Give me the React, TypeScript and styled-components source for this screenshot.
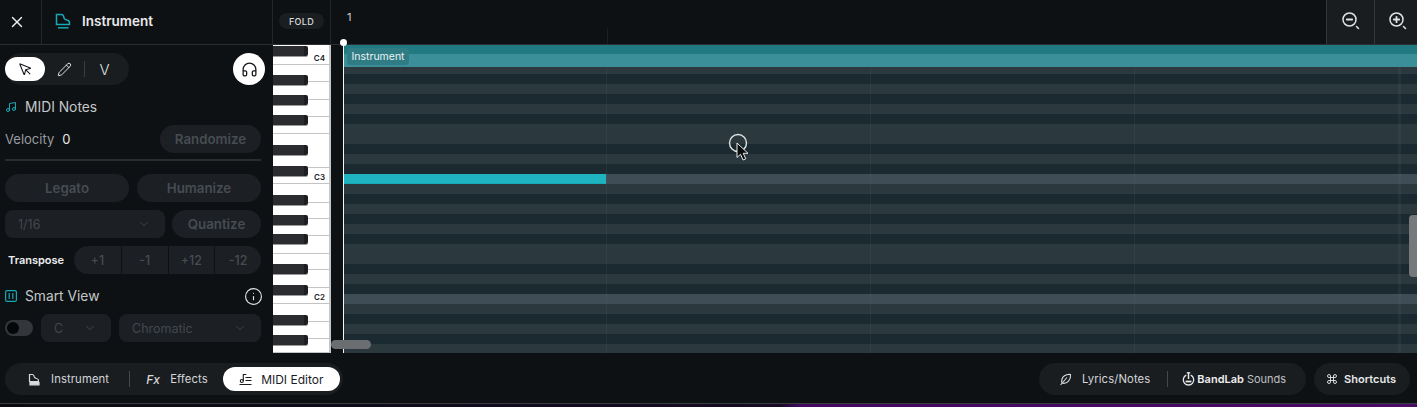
import styled, {createGlobalStyle} from "styled-components";
import {ChevronDown, Command, Headphones, Info, MousePointer, Music, Pencil, X} from "lucide-react";

const GlobalStyle = createGlobalStyle`
  html, body {
    margin: 0;
    padding: 0;
    background: #0e1114;
    overflow: hidden;
  }

  * {
    box-sizing: border-box;
  }
`;

const OCTAVE = ["C", "L", "D", "L", "D", "L", "D", "L", "L", "D", "L", "D"];
const rows = ["D", ...OCTAVE, ...OCTAVE, ...OCTAVE].slice(0, 31);

const WHITE_KEYS: { height: number, label?: string }[] = [
    {height: 20, label: "C4"}, {height: 17}, {height: 18}, {height: 17}, {height: 17}, {height: 34},
    {height: 16, label: "C3"}, {height: 19}, {height: 16}, {height: 17}, {height: 18}, {height: 16},
    {height: 18}, {height: 16, label: "C2"}, {height: 18}, {height: 17}, {height: 14},
];
const BLACK_KEYS = [1, 30, 50, 70, 100, 121, 150, 170, 189, 219, 240, 270, 290];
const BARS = [262, 526, 790, 1054];

function PianoIcon() {
    return (
        <svg width="18" height="18" viewBox="0 0 18 18" fill="none" stroke="currentColor" strokeWidth="1.5">
            <path d="M2.5 12.5V2.5h5c2 0 2.2 1.4 2.4 3 .2 1.600 1 2.200 3 2.600 1.700.3 2.600 1.300 2.600 3v1.400z"/>
            <path d="M4 15.800h10.500"/>
        </svg>
    );
}

function SmallPiano() {
    return (
        <svg width="13" height="13" viewBox="0 0 13 13" fill="none" stroke="#d8dadb" strokeWidth="1.2">
            <path d="M1.500 8.500V1.500h3c1.400 0 1.500 1 1.700 2.200.2 1 .8 1.500 2.300 1.800 1.300.2 2 1 2 2.200v.8z"/>
            <path d="M2 9v2.800h9V9" fill="#d8dadb"/>
        </svg>
    );
}

function MidiIcon() {
    return (
        <svg width="13" height="13" viewBox="0 0 13 13" fill="none" stroke="#1a1c1f" strokeWidth="1.100">
            <circle cx="2.800" cy="8" r="1.500"/>
            <path d="M4.300 8V1.500h3M6.500 4.500h6M6.500 7.500h6M.500 11.500h12"/>
        </svg>
    );
}

function MagnifierIcon({plus}: { plus?: boolean }) {
    return (
        <svg width="20" height="20" viewBox="0 0 20 20" fill="none" stroke="#dfe1e2" strokeWidth="1.500" strokeLinecap="round">
            <circle cx="8.500" cy="8.500" r="6.500"/>
            <path d="M5.800 8.500h5.400" strokeWidth="1.800"/>
            {plus && <path d="M8.500 5.800v5.400" strokeWidth="1.800"/>}
            <path d="M15.500 15.500l2 2"/>
        </svg>
    );
}

function FeatherIcon() {
    return (
        <svg width="13" height="13" viewBox="0 0 13 13" fill="none" stroke="#d8dadb" strokeWidth="1.100">
            <path d="M3 10c-.8-3 .2-5.500 2.500-7.200C7.500 1.500 10 1.200 11.500 1.500c.3 2-.3 4.500-1.800 6.300C7.800 10 5.300 10.800 3 10z"/>
            <path d="M1.500 12L8 4.500"/>
        </svg>
    );
}

function BandLabIcon() {
    return (
        <svg width="13" height="14" viewBox="0 0 13 14" fill="none" stroke="#e6e8e9" strokeWidth="1.300">
            <path d="M4.300 3.100a5.200 5.200 0 1 0 4.400 0"/>
            <path d="M6.500 .5v6.500" strokeWidth="1.500"/>
            <path d="M4.800 .8h3.400"/>
            <path d="M3.600 9.500h5.800" strokeWidth="1.800"/>
        </svg>
    );
}

function SmartViewIcon() {
    return (
        <svg width="12" height="12" viewBox="0 0 12 12" fill="none" stroke="#16a8b5" strokeWidth="1.200">
            <rect x=".6" y=".6" width="10.800" height="10.800" rx="1.500"/>
            <path d="M4.200 3v6M7.800 3v6"/>
        </svg>
    );
}

function CursorIcon() {
    return (
        <svg width="28" height="36" viewBox="0 0 28 36" fill="none">
            <circle cx="10" cy="10" r="8.500" stroke="#dfe3e4" strokeWidth="1.400"/>
            <path d="M9 10v14.500l3.500-3.200 2.600 5.700 2.700-1.200-2.600-5.500h4.800z" fill="#0b0c0e" stroke="#e8eaeb" strokeWidth="1"/>
        </svg>
    );
}

function App() {
    return (
        <>
            <GlobalStyle/>
            <Page>
                <Header>
                    <CloseCell><X size={18} strokeWidth={1.8}/></CloseCell>
                    <TitleCell>
                        <TealIcon><PianoIcon/></TealIcon>
                        <span>Instrument</span>
                    </TitleCell>
                    <FoldCell><FoldButton>FOLD</FoldButton></FoldCell>
                    <Ruler>
                        <BarNumber>1</BarNumber>
                        <RulerTick/>
                    </Ruler>
                    <ZoomButton><MagnifierIcon/></ZoomButton>
                    <ZoomButton $narrow><MagnifierIcon plus/></ZoomButton>
                </Header>

                <Main>
                    <Sidebar>
                        <ToolRow>
                            <ToolPill>
                                <ActiveTool><MousePointer size={15} strokeWidth={1.7}/></ActiveTool>
                                <Tool><Pencil size={15} strokeWidth={1.6}/></Tool>
                                <ToolDivider/>
                                <Tool $text>V</Tool>
                            </ToolPill>
                            <RoundButton><Headphones size={17} strokeWidth={1.8}/></RoundButton>
                        </ToolRow>

                        <SectionTitle>
                            <TealIcon><Music size={12} strokeWidth={2}/></TealIcon>
                            MIDI Notes
                        </SectionTitle>

                        <VelocityRow>
                            <Label>Velocity</Label>
                            <Value>0</Value>
                            <GhostButton $width="101px">Randomize</GhostButton>
                        </VelocityRow>
                        <Rule/>

                        <ButtonRow>
                            <GhostButton $grow>Legato</GhostButton>
                            <GhostButton $grow>Humanize</GhostButton>
                        </ButtonRow>

                        <QuantizeRow>
                            <SelectBox $width="160px">1/16<ChevronDown size={14} strokeWidth={1.6}/></SelectBox>
                            <GhostButton $width="89px">Quantize</GhostButton>
                        </QuantizeRow>

                        <TransposeRow>
                            <TransposeLabel>Transpose</TransposeLabel>
                            <TransposeGroup>
                                {["+1", "-1", "+12", "-12"].map(step => (
                                    <TransposeStep key={step}>{step}</TransposeStep>
                                ))}
                            </TransposeGroup>
                        </TransposeRow>

                        <SmartRow>
                            <SmartTitle>
                                <SmartViewIcon/>
                                Smart View
                            </SmartTitle>
                            <InfoMark><Info size={19} strokeWidth={1.4}/></InfoMark>
                        </SmartRow>

                        <ScaleRow>
                            <Toggle><ToggleKnob/></Toggle>
                            <SelectBox $width="70px">C<ChevronDown size={14} strokeWidth={1.6}/></SelectBox>
                            <SelectBox $width="142px">Chromatic<ChevronDown size={14} strokeWidth={1.6}/></SelectBox>
                        </ScaleRow>
                    </Sidebar>

                    <Editor>
                        <Keyboard>
                            {WHITE_KEYS.map((key, i) => (
                                <WhiteKey key={i} $height={key.height}>{key.label}</WhiteKey>
                            ))}
                            {BLACK_KEYS.map(top => <BlackKey key={top} $top={top}/>)}
                        </Keyboard>
                        <Gutter/>
                        <Grid>
                            {rows.map((kind, i) => <Row key={i} $kind={kind}/>)}
                            {BARS.map(x => <BarLine key={x} $x={x}/>)}
                            <Clip>
                                <ClipLabel>Instrument</ClipLabel>
                            </Clip>
                            <Note/>
                            <VScroll/>
                            <Pointer><CursorIcon/></Pointer>
                        </Grid>
                        <Playhead/>
                        <HScroll/>
                    </Editor>
                </Main>

                <Footer>
                    <Pill>
                        <TabItem $pad="0 20px 0 23px"><SmallPiano/>Instrument</TabItem>
                        <PillDivider/>
                        <TabItem $pad="0 15px 0 16px"><FxMark>Fx</FxMark>Effects</TabItem>
                        <ActiveTab><MidiIcon/>MIDI Editor</ActiveTab>
                    </Pill>
                    <FooterRight>
                        <Pill>
                            <TabItem $pad="0 17px 0 20px"><FeatherIcon/>Lyrics/Notes</TabItem>
                            <PillDivider/>
                            <SoundsItem>
                                <BandLabIcon/>
                                <strong>BandLab</strong> Sounds
                            </SoundsItem>
                        </Pill>
                        <Pill>
                            <ShortcutItem><Command size={12} strokeWidth={1.8}/>Shortcuts</ShortcutItem>
                        </Pill>
                    </FooterRight>
                </Footer>
                <BottomStrip/>
            </Page>
        </>
    )
}

const Page = styled.div`
  width: 1417px;
  height: 407px;
  display: flex;
  flex-direction: column;
  background: #0e1114;
  color: #e6e8e9;
  font-family: "Inter", "Liberation Sans", sans-serif;
  overflow: hidden;
`;

const Header = styled.header`
  height: 45px;
  flex: none;
  display: flex;
  border-bottom: 1px solid #2b2e31;
`;

const CloseCell = styled.div`
  width: 42px;
  display: flex;
  align-items: center;
  justify-content: center;
  padding-right: 8px;
  border-right: 1px solid #24272a;
  color: #f0f1f2;
`;

const TitleCell = styled.div`
  width: 231px;
  display: flex;
  align-items: center;
  gap: 10px;
  padding: 0 0 2px 12px;
  font-size: 13.5px;
  font-weight: 600;
  color: #e8eaeb;
  border-right: 1px solid #24272a;
`;

const TealIcon = styled.span`
  display: flex;
  color: #16a8b5;
`;

const FoldCell = styled.div`
  width: 58px;
  display: flex;
  align-items: center;
  justify-content: center;
  padding-bottom: 2px;
  border-right: 1px solid #24272a;
`;

const FoldButton = styled.div`
  width: 45px;
  height: 16px;
  display: flex;
  align-items: center;
  justify-content: center;
  border-radius: 8px;
  background: #1b1e21;
  font-size: 9px;
  font-weight: 500;
  letter-spacing: .3px;
  color: #d8dadb;
`;

const Ruler = styled.div`
  flex: 1;
  position: relative;
  padding: 11px 0 0 16px;
`;

const BarNumber = styled.div`
  font-size: 11px;
  line-height: 12px;
  color: #cfd2d4;
`;

const RulerTick = styled.div`
  position: absolute;
  left: 276px;
  top: 28px;
  bottom: 0;
  width: 1px;
  background: #1c2024;
`;

const ZoomButton = styled.div<{ $narrow?: boolean }>`
  width: ${p => p.$narrow ? "43px" : "48px"};
  display: flex;
  align-items: center;
  justify-content: center;
  padding: ${p => p.$narrow ? "0 0 3px 4px" : "0 0 3px 0"};
  background: #1a1d20;
  border-left: 1px solid #33363a;
`;

const Main = styled.main`
  height: 308px;
  flex: none;
  display: flex;
`;

const Sidebar = styled.aside`
  width: 273px;
  flex: none;
  padding: 8px 12px 0 5px;
  display: flex;
  flex-direction: column;
`;

const ToolRow = styled.div`
  margin-right: -4px;
  display: flex;
  justify-content: space-between;
  align-items: center;
`;

const ToolPill = styled.div`
  width: 124px;
  height: 32px;
  padding-right: 5px;
  display: flex;
  align-items: center;
  border-radius: 16px;
  background: #1a1d20;
`;

const ActiveTool = styled.div`
  width: 40px;
  height: 24px;
  flex: none;
  display: flex;
  align-items: center;
  justify-content: center;
  border-radius: 12px;
  background: #fff;
  color: #15171a;
`;

const Tool = styled.div<{ $text?: boolean }>`
  flex: 1;
  display: flex;
  justify-content: center;
  color: #dfe1e2;
  font-size: ${p => p.$text ? "15px" : "inherit"};
  font-weight: 300;
`;

const ToolDivider = styled.div`
  width: 1px;
  height: 16px;
  background: #3a3d41;
`;

const RoundButton = styled.div`
  width: 32px;
  height: 32px;
  display: flex;
  align-items: center;
  justify-content: center;
  border-radius: 50%;
  background: #fff;
  color: #15171a;
`;

const SectionTitle = styled.div`
  margin-top: 14px;
  height: 16px;
  display: flex;
  align-items: center;
  gap: 8px;
  font-size: 13.8px;
  color: #c4c7c9;
`;

const VelocityRow = styled.div`
  margin-top: 10px;
  display: flex;
  align-items: center;
  font-size: 13px;
`;

const Label = styled.span`
  color: #989ca0;
`;

const Value = styled.span`
  margin-left: 8px;
  flex: 1;
  color: #e6e8e9;
`;

const GhostButton = styled.div<{ $width?: string, $grow?: boolean }>`
  width: ${p => p.$width ?? "auto"};
  flex: ${p => p.$grow ? 1 : "none"};
  height: 28px;
  display: flex;
  align-items: center;
  justify-content: center;
  border-radius: 14px;
  background: #1c1f23;
  color: #474c52;
  font-size: 13.3px;
  font-weight: 600;
`;

const Rule = styled.div`
  height: 2px;
  margin-top: 6px;
  background: #2a2d30;
`;

const ButtonRow = styled.div`
  margin-top: 13px;
  display: flex;
  gap: 8px;
`;

const QuantizeRow = styled.div`
  margin-top: 8px;
  display: flex;
  justify-content: space-between;
`;

const SelectBox = styled.div<{ $width: string }>`
  width: ${p => p.$width};
  height: 28px;
  flex: none;
  padding: 0 14px 0 13px;
  display: flex;
  align-items: center;
  justify-content: space-between;
  border-radius: 8px;
  background: #1c1f23;
  color: #43484e;
  font-size: 12.5px;
`;

const TransposeRow = styled.div`
  margin-top: 8px;
  display: flex;
  align-items: center;
  justify-content: space-between;
`;

const TransposeLabel = styled.span`
  margin-left: 3px;
  font-size: 11px;
  font-weight: 600;
  color: #eceeef;
`;

const TransposeGroup = styled.div`
  width: 187px;
  height: 28px;
  display: grid;
  grid-template-columns: repeat(4, 1fr);
  border-radius: 14px;
  overflow: hidden;
  background: #1c1f23;
`;

const TransposeStep = styled.div`
  display: flex;
  align-items: center;
  justify-content: center;
  color: #474c52;
  font-size: 12.5px;
  font-weight: 500;

  & + & {
    border-left: 1px solid #0e1114;
  }
`;

const SmartRow = styled.div`
  margin-top: 14px;
  height: 16px;
  display: flex;
  align-items: center;
  justify-content: space-between;
`;

const SmartTitle = styled.div`
  display: flex;
  align-items: center;
  gap: 8px;
  font-size: 13.8px;
  color: #c4c7c9;
`;

const InfoMark = styled.span`
  display: flex;
  margin-right: -2px;
  color: #e6e8e9;
`;

const ScaleRow = styled.div`
  margin-top: 10px;
  display: flex;
  align-items: center;
  gap: 8px;
`;

const Toggle = styled.div`
  width: 28px;
  height: 16px;
  padding: 2px;
  border-radius: 8px;
  background: #33373c;
`;

const ToggleKnob = styled.div`
  width: 12px;
  height: 12px;
  border-radius: 50%;
  background: #050607;
`;

const Editor = styled.div`
  flex: 1;
  min-width: 0;
  position: relative;
  display: flex;
`;

const Keyboard = styled.div`
  width: 58px;
  flex: none;
  position: relative;
  display: flex;
  flex-direction: column;
  border-right: 2px solid #c6c6c6;
  background: #fff;
`;

const WhiteKey = styled.div<{ $height: number }>`
  height: ${p => p.$height}px;
  flex: none;
  padding: 0 4px 1px 0;
  display: flex;
  align-items: flex-end;
  justify-content: flex-end;
  border-bottom: 1px solid #c4c4c4;
  color: #1a1c1f;
  font-size: 8px;
  font-weight: 600;
  line-height: 10px;

  &:last-of-type {
    border-bottom: 0;
  }
`;

const BlackKey = styled.div<{ $top: number }>`
  position: absolute;
  left: 0;
  top: ${p => p.$top}px;
  width: 35px;
  height: 10px;
  border-radius: 0 2px 2px 0;
  background: linear-gradient(90deg, #2a2c30 0, #2a2c30 31px, #1d1e21 31px);
  box-shadow: 0 1px 0 #9a9a9a;
`;

const Gutter = styled.div`
  width: 13px;
  flex: none;
`;

const Grid = styled.div`
  flex: 1;
  position: relative;
  overflow: hidden;
  display: flex;
  flex-direction: column;
`;

const Row = styled.div<{ $kind: string }>`
  flex: none;
  height: 10px;
  background: ${p => p.$kind === "C" ? "#3f4d56" : p.$kind === "L" ? "#2b383e" : "#1a2a30"};

  &:first-child {
    height: 9px;
  }
`;

const BarLine = styled.div<{ $x: number }>`
  position: absolute;
  top: 0;
  bottom: 0;
  left: ${p => p.$x}px;
  width: ${p => p.$x > 1000 ? "3px" : "1px"};
  background: rgba(96, 106, 120, .15);
`;

const Clip = styled.div`
  position: absolute;
  left: 0;
  right: 0;
  top: 0;
  height: 22px;
  padding: 3px;
  background: linear-gradient(#217981 0, #217981 9px, #3a8f99 9px);
`;

const ClipLabel = styled.div`
  width: 62px;
  height: 17px;
  display: flex;
  align-items: center;
  justify-content: center;
  border-radius: 4px;
  background: #2f7c85;
  color: #eef3f4;
  font-size: 10.5px;
`;

const Note = styled.div`
  position: absolute;
  left: 0;
  top: 129px;
  width: 262px;
  height: 10px;
  background: #1fb2bf;
  border-bottom: 1px solid #14aab8;
`;

const VScroll = styled.div`
  position: absolute;
  right: 0;
  top: 170px;
  width: 8px;
  height: 62px;
  border-radius: 4px 0 0 4px;
  background: #75797c;
`;

const Pointer = styled.div`
  position: absolute;
  left: 384px;
  top: 88px;
  line-height: 0;
`;

const Playhead = styled.div`
  position: absolute;
  left: 70px;
  top: -1px;
  bottom: 0;
  width: 1px;
  background: #f4f5f5;

  &::before {
    content: "";
    position: absolute;
    left: -3px;
    top: -5px;
    width: 7px;
    height: 7px;
    border-radius: 50%;
    background: #fff;
  }
`;

const HScroll = styled.div`
  position: absolute;
  left: 58px;
  bottom: 4px;
  width: 40px;
  height: 9px;
  border-radius: 5px;
  background: #6b6e71;
`;

const Footer = styled.footer`
  height: 51px;
  flex: none;
  padding: 10px 7px 9px 5px;
  display: flex;
  align-items: flex-start;
  justify-content: space-between;
  border-bottom: 1px solid #3a3d40;
`;

const Pill = styled.div`
  height: 32px;
  padding-right: 3px;
  display: flex;
  align-items: center;
  border-radius: 16px;
  background: #1a1d20;
`;

const FooterRight = styled.div`
  display: flex;
  gap: 8px;
`;

const TabItem = styled.div<{ $pad: string }>`
  padding: ${p => p.$pad};
  display: flex;
  align-items: center;
  gap: 10px;
  font-size: 11.3px;
  letter-spacing: .1px;
  color: #d4d6d8;
`;

const FxMark = styled.span`
  font-style: italic;
  font-weight: 500;
  font-size: 12px;
`;

const PillDivider = styled.div`
  width: 1px;
  height: 16px;
  background: #44474b;
`;

const ActiveTab = styled.div`
  width: 117px;
  height: 24px;
  display: flex;
  align-items: center;
  justify-content: center;
  gap: 9px;
  border-radius: 12px;
  background: #fff;
  color: #1a1c1f;
  font-size: 12px;
`;

const SoundsItem = styled.div`
  padding: 0 17px 0 14px;
  display: flex;
  align-items: center;
  gap: 2px;
  font-size: 11px;
  color: #bfc2c4;

  strong {
    margin-right: 1px;
    color: #eceeef;
    font-weight: 600;
  }
`;

const ShortcutItem = styled.div`
  padding: 0 11px 0 12px;
  display: flex;
  align-items: center;
  gap: 6px;
  font-size: 11px;
  font-weight: 600;
  color: #e6e8e9;
`;

const BottomStrip = styled.div`
  flex: 1;
  background: linear-gradient(90deg, #0a0b10 0, #160a24 55%, #420a60 56.5%, #4a0a66 100%);
`;

export default App;
